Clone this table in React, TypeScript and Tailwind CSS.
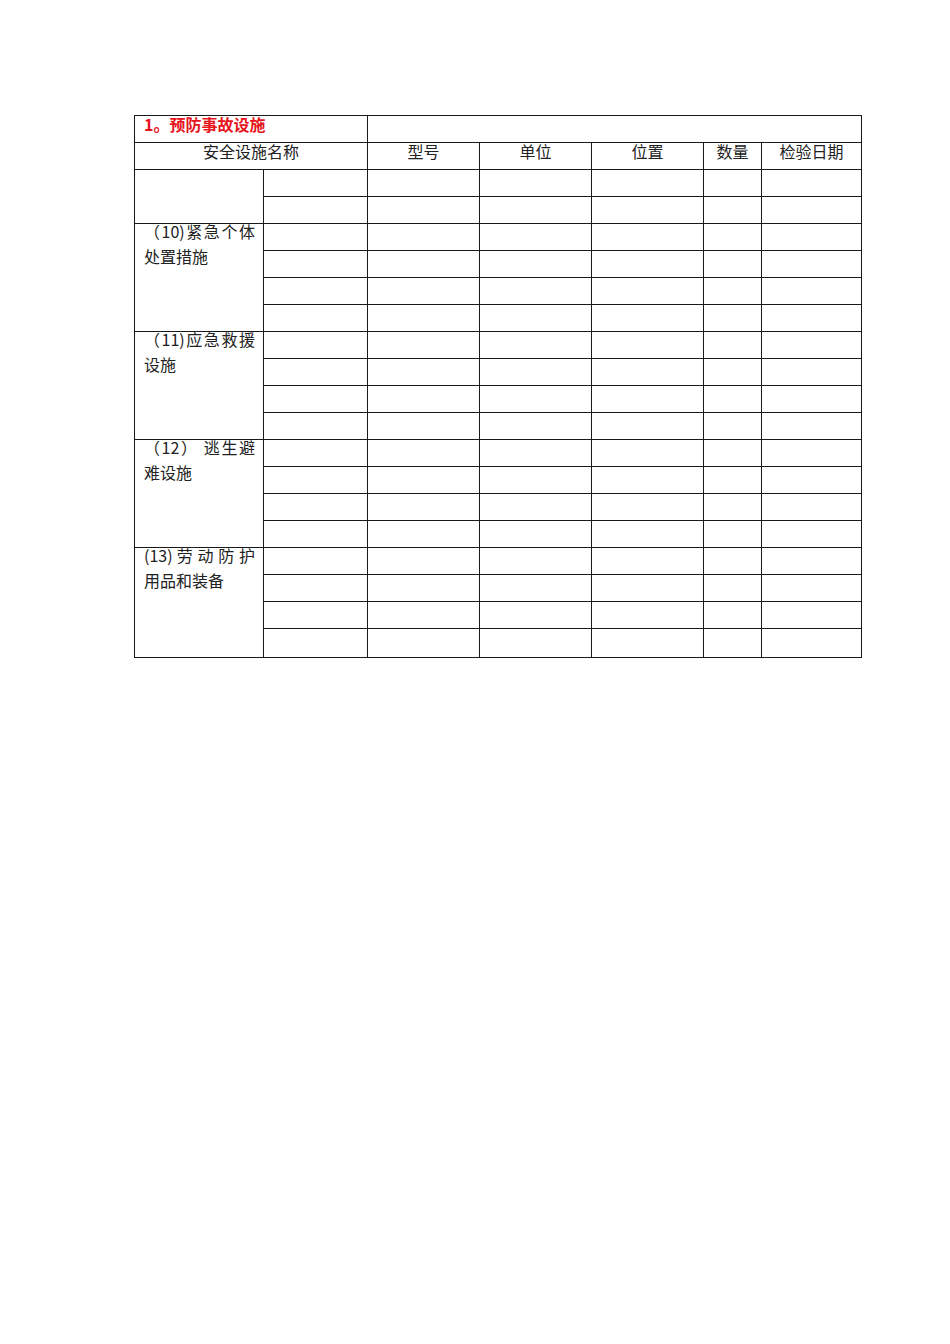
import React from 'react';

const groups = [
  { lines: [], rows: 2 },
  { lines: ['（10)紧急个体', '处置措施'], rows: 4 },
  { lines: ['（11)应急救援', '设施'], rows: 4 },
  { lines: ['（12） 逃生避', '难设施'], rows: 4 },
  { lines: ['(13) 劳 动 防 护', '用品和装备'], rows: 4 },
];

const headers = ['型号', '单位', '位置', '数量', '检验日期'];

const cell = 'border border-[#1a1a1a] p-0';

export default function App() {
  return (
    <div className="min-h-[1344px] w-[950px] bg-white pt-[115px] pl-[134px] font-['Noto_Sans_CJK_SC',sans-serif] text-[16px] text-[#222]">
      <table className="border-collapse table-fixed w-[727px]">
        <colgroup>
          <col className="w-[129px]" />
          <col className="w-[104px]" />
          <col className="w-[112px]" />
          <col className="w-[112px]" />
          <col className="w-[112px]" />
          <col className="w-[58px]" />
          <col className="w-[100px]" />
        </colgroup>
        <tbody>
          <tr className="h-[27px]">
            <td colSpan={2} className={`${cell} align-top pl-[9px] pt-[1px] leading-[15px] font-semibold text-[#e8141c]`}>
              1。预防事故设施
            </td>
            <td colSpan={5} className={cell}></td>
          </tr>
          <tr className="h-[27px]">
            <td colSpan={2} className={`${cell} align-top text-center pt-[1px] leading-[15px]`}>
              安全设施名称
            </td>
            {headers.map(h => (
              <td key={h} className={`${cell} align-top text-center pt-[1px] leading-[15px]`}>
                {h}
              </td>
            ))}
          </tr>
          {groups.map((g, gi) =>
            Array.from({ length: g.rows }).map((_, ri) => {
              const last = gi === groups.length - 1 && ri === g.rows - 1;
              return (
                <tr key={`${gi}-${ri}`} className={last ? 'h-[29px]' : 'h-[27px]'}>
                  {ri === 0 && (
                    <td rowSpan={g.rows} className={`${cell} align-top pl-[9px] pr-[8px] leading-[25px]`}>
                      <div className="-mt-[5px]">
                        {g.lines.map((l, li) => (
                          <div key={li} className={li === 0 ? '[text-align-last:justify] whitespace-nowrap' : ''}>
                            {l}
                          </div>
                        ))}
                      </div>
                    </td>
                  )}
                  {Array.from({ length: 6 }).map((__, ci) => (
                    <td key={ci} className={cell}></td>
                  ))}
                </tr>
              );
            })
          )}
        </tbody>
      </table>
    </div>
  );
}
